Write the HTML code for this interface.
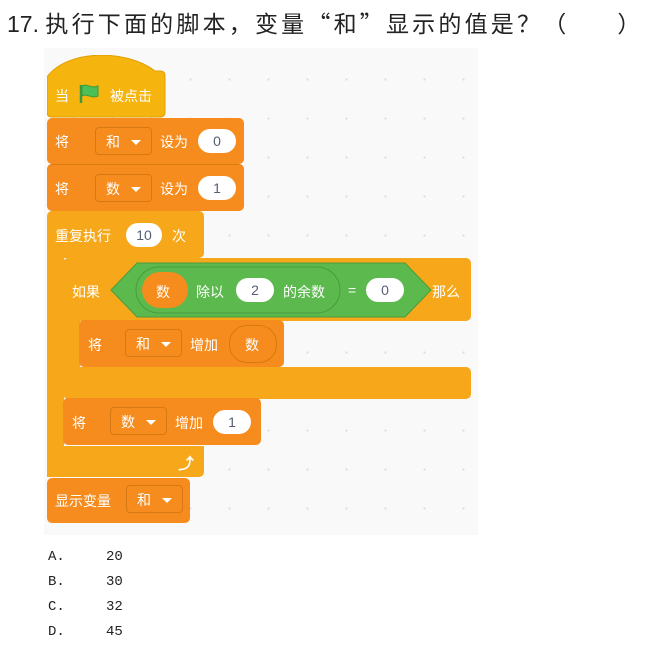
<!DOCTYPE html>
<html><head><meta charset="utf-8"><style>
body{margin:0;width:650px;height:651px;background:#fff;position:relative;overflow:hidden;font-family:"Liberation Sans","Noto Sans CJK SC",sans-serif}
.a{position:absolute}
.t{position:absolute;left:7px;top:5px;font-size:23px;color:#222;white-space:nowrap;letter-spacing:3.2px;font-family:"Liberation Sans","Noto Sans CJK SC",sans-serif}
.t .n{letter-spacing:0}
.t .q{font-family:"Noto Sans CJK SC",sans-serif}
.canvas{position:absolute;left:44px;top:48px;width:434px;height:487px;background:#f9f9f9;background-image:radial-gradient(#ddd 1px,transparent 1.2px);background-size:39px 39px;background-position:10px 12px}
.y{background:#f6b40f}
.c{background:#f7a81a}
.o{background:#f68c1d}
.tx{position:absolute;color:#fff;font-size:14px;white-space:nowrap;font-family:"Liberation Sans","Noto Sans CJK SC",sans-serif}
.w{position:absolute;background:#fff;border-radius:14px;color:#575e75;font-size:14px;text-align:center;line-height:24px;height:24px;font-family:"Liberation Sans",sans-serif}
.dd{position:absolute;border:1px solid #d87811;border-radius:4px;height:28px;color:#fff;font-size:14px;line-height:28px;padding-left:10px;box-sizing:border-box;background:#f68c1d;font-family:"Liberation Sans","Noto Sans CJK SC",sans-serif}
.dd:after{content:"";position:absolute;right:10px;top:12px;border:5px solid transparent;border-top:5px solid #fff}
.opt{position:absolute;left:48px;font-size:14px;color:#222;font-family:"Liberation Mono","Noto Serif CJK SC",monospace}
.opt span{position:absolute;left:58px}
</style></head><body>
<div class="t"><span class="n">17. </span>执行下面的脚本，变量<span class="q">“</span>和<span class="q">”</span>显示的值是？<span class="q">（</span>&nbsp;&nbsp;&nbsp;&nbsp;&nbsp;<span class="q">）</span></div>
<div class="canvas"></div>

<!-- hat -->
<svg class="a" style="left:47px;top:55px" width="119" height="63" viewBox="0 0 119 63"><path d="M0 22C20 -6 80 -6 108 16H113Q118 16 118 21V57Q118 62 113 62H5Q0 62 0 57Z" fill="#f6b40f" stroke="#e0a000"/></svg>
<div class="tx" style="left:55px;top:86px">当</div>
<svg class="a" style="left:78px;top:83px" width="24" height="22" viewBox="0 0 24 22"><path d="M3 2v18" stroke="#3d9a3a" stroke-width="2.5"/><path d="M4 3c5-3 9 3 16 0v10c-7 3-11-3-16 0z" fill="#4cbf56" stroke="#3d9a3a" stroke-width="1"/></svg>
<div class="tx" style="left:110px;top:86px">被点击</div>

<!-- set 1 -->
<div class="a o" style="left:47px;top:118px;width:197px;height:46px;border-radius:5px"></div>
<div class="tx" style="left:55px;top:132px">将</div>
<div class="dd" style="left:95px;top:127px;width:57px">和</div>
<div class="tx" style="left:160px;top:132px">设为</div>
<div class="w" style="left:198px;top:129px;width:38px">0</div>
<!-- set 2 -->
<div class="a o" style="left:47px;top:165px;width:197px;height:46px;border-radius:5px;box-shadow:0 -1px 0 #dc7a12"></div>
<div class="tx" style="left:55px;top:179px">将</div>
<div class="dd" style="left:95px;top:174px;width:57px">数</div>
<div class="tx" style="left:160px;top:179px">设为</div>
<div class="w" style="left:198px;top:176px;width:38px">1</div>

<!-- repeat -->
<div class="a c" style="left:47px;top:211px;width:157px;height:47px;border-radius:5px 5px 5px 0"></div>
<div class="a c" style="left:47px;top:240px;width:17px;height:237px"></div>
<div class="a c" style="left:47px;top:446px;width:157px;height:31px;border-radius:0 0 5px 5px"></div>
<div class="tx" style="left:55px;top:226px">重复执行</div>
<div class="w" style="left:126px;top:223px;width:36px">10</div>
<div class="tx" style="left:172px;top:226px">次</div>
<div class="tx" style="left:178px;top:450px;font-size:16px;font-weight:bold">⤴</div>

<!-- if -->
<div class="a c" style="left:63px;top:258px;width:408px;height:63px;border-radius:5px"></div>
<div class="a c" style="left:63px;top:300px;width:17px;height:80px"></div>
<div class="a c" style="left:63px;top:367px;width:408px;height:32px;border-radius:0 5px 5px 5px"></div>
<div class="tx" style="left:72px;top:282px">如果</div>
<svg class="a" style="left:110px;top:262px" width="322" height="56" viewBox="0 0 322 56"><path d="M1 28L27 1H295L321 28L295 55H27Z" fill="#5cb94d" stroke="#4a9c3e"/><rect x="26" y="5" width="204" height="46" rx="23" fill="#5cb94d" stroke="#4a9c3e"/></svg>
<div class="a o" style="left:142px;top:272px;width:46px;height:36px;border-radius:18px"></div>
<div class="tx" style="left:156px;top:282px">数</div>
<div class="tx" style="left:196px;top:282px">除以</div>
<div class="w" style="left:236px;top:278px;width:38px">2</div>
<div class="tx" style="left:283px;top:282px">的余数</div>
<div class="tx" style="left:348px;top:282px">=</div>
<div class="w" style="left:366px;top:278px;width:38px">0</div>
<div class="tx" style="left:432px;top:282px">那么</div>

<!-- change 和 -->
<div class="a o" style="left:79px;top:320px;width:205px;height:47px;border-radius:5px"></div>
<div class="tx" style="left:88px;top:335px">将</div>
<div class="dd" style="left:125px;top:329px;width:57px">和</div>
<div class="tx" style="left:190px;top:335px">增加</div>
<div class="a o" style="left:229px;top:325px;width:46px;height:36px;border-radius:18px;border:1px solid #d87811"></div>
<div class="tx" style="left:245px;top:335px">数</div>

<!-- change 数 -->
<div class="a o" style="left:63px;top:398px;width:198px;height:47px;border-radius:5px"></div>
<div class="tx" style="left:72px;top:413px">将</div>
<div class="dd" style="left:110px;top:407px;width:57px">数</div>
<div class="tx" style="left:175px;top:413px">增加</div>
<div class="w" style="left:213px;top:410px;width:38px">1</div>

<!-- show -->
<div class="a o" style="left:47px;top:478px;width:143px;height:45px;border-radius:5px"></div>
<div class="tx" style="left:55px;top:491px">显示变量</div>
<div class="dd" style="left:126px;top:485px;width:57px">和</div>

<div class="opt" style="top:549px">A.<span>20</span></div>
<div class="opt" style="top:574px">B.<span>30</span></div>
<div class="opt" style="top:599px">C.<span>32</span></div>
<div class="opt" style="top:624px">D.<span>45</span></div>
</body></html>
